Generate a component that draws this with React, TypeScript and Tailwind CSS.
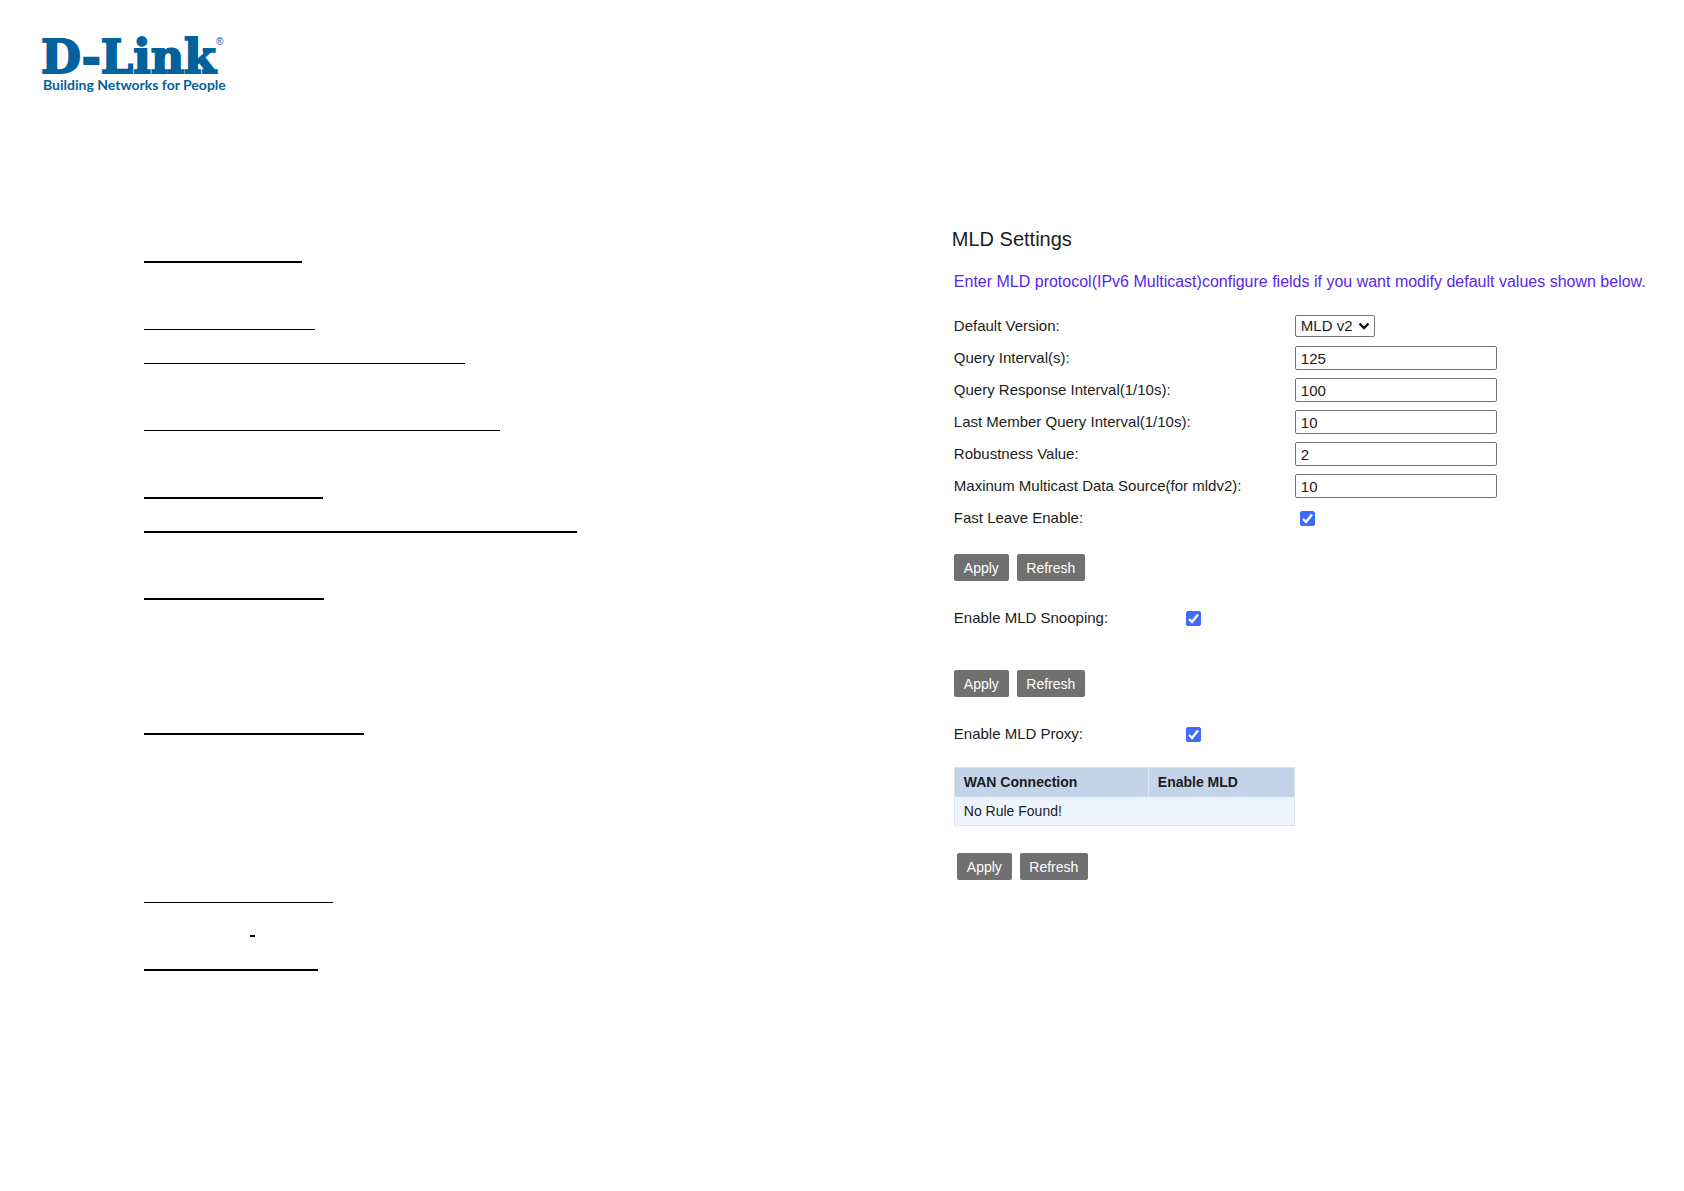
import React, { useState } from "react";

// blank form lines on the left page, each one sits at the bottom of its row
const rules = [
  { row: "h-9", line: "h-0.5 w-[158px]" },
  { row: "h-[67px]", line: "h-px w-[171px]" },
  { row: "h-[34px]", line: "h-px w-[321px]" },
  { row: "h-[67px]", line: "h-px w-[356px]" },
  { row: "h-[68px]", line: "h-0.5 w-[179px]" },
  { row: "h-[34px]", line: "h-0.5 w-[433px]" },
  { row: "h-[67px]", line: "h-0.5 w-[180px]" },
  { row: "h-[135px]", line: "h-0.5 w-[220px]" },
  { row: "h-[168px]", line: "h-px w-[189px]" },
  { row: "h-[34px]", line: "ml-[106px] h-0.5 w-[5px]" },
  { row: "h-[34px]", line: "h-0.5 w-[174px]" },
];

const fields = [
  { id: "queryInterval", label: "Query Interval(s):", value: "125" },
  { id: "queryResponse", label: "Query Response Interval(1/10s):", value: "100" },
  { id: "lastMember", label: "Last Member Query Interval(1/10s):", value: "10" },
  { id: "robustness", label: "Robustness Value:", value: "2" },
  { id: "maxSource", label: "Maxinum Multicast Data Source(for mldv2):", value: "10" },
];

const Logo = () => (
  <div className="w-fit text-[#03629b]">
    <div className="flex items-start">
      <span className="font-['DejaVu_Serif',serif] text-[46px] font-bold leading-[42px] [-webkit-text-stroke:2px_#03629b]">
        D-Link
      </span>
      <span className="font-['Liberation_Sans',sans-serif] text-[10px] leading-3">®</span>
    </div>
    <p className="pl-0.5 font-[Lato,sans-serif] text-sm font-bold leading-[14px]">
      Building Networks for People
    </p>
  </div>
);

const Check = ({ id }: { id: string }) => {
  const [on, setOn] = useState<boolean>(true);
  return (
    <span className="grid size-[15px]">
      <input
        id={id}
        type="checkbox"
        checked={on}
        onChange={() => setOn(!on)}
        className="col-start-1 row-start-1 size-[15px] appearance-none rounded-xs border border-gray-500 checked:border-[#3f6bfb] checked:bg-[#3f6bfb]"
      />
      {on && (
        <svg viewBox="0 0 15 15" className="pointer-events-none col-start-1 row-start-1 size-[15px]">
          <path d="M3 8 L6 11 L12 3.4" fill="none" stroke="#fff" strokeWidth="2.4" />
        </svg>
      )}
    </span>
  );
};

const Actions = () => (
  <div className="flex gap-2">
    <button type="submit" className="h-[27px] w-[55px] rounded-xs bg-[#707070] text-sm text-white">
      Apply
    </button>
    <button type="reset" className="h-[27px] w-[68px] rounded-xs bg-[#707070] text-sm text-white">
      Refresh
    </button>
  </div>
);

const App = () => {
  const stop = (e: React.FormEvent) => e.preventDefault();

  return (
    <div className="min-h-screen bg-white text-[#1c1c1c]">
      <header className="px-[41px] pt-9">
        <Logo />
      </header>

      <main className="grid grid-cols-[13fr_10fr] pt-[135px] font-['Liberation_Sans',Arial,sans-serif] text-[15px]">
        {/* Left page */}
        <div className="pl-36">
          {rules.map((rule, i) => (
            <div key={i} className={`flex items-end ${rule.row}`}>
              <div className={`bg-black ${rule.line}`} />
            </div>
          ))}
        </div>

        {/* MLD settings */}
        <section>
          <h1 className="text-xl leading-6">MLD Settings</h1>
          <div className="pl-0.5">
            <p className="mt-[21px] whitespace-nowrap text-base leading-5 text-[#5a27e6]">
              Enter MLD protocol(IPv6 Multicast)configure fields if you want modify default values
              shown below.
            </p>

            <form onSubmit={stop} className="mt-[18px]">
              <div className="flex h-8 items-center">
                <label htmlFor="version" className="w-[341px]">
                  Default Version:
                </label>
                <span className="grid items-center">
                  <select
                    id="version"
                    className="col-start-1 row-start-1 h-[22px] w-20 appearance-none rounded-xs border border-[#767676] bg-white pl-[5px] leading-5"
                  >
                    <option>MLD v2</option>
                    <option>MLD v1</option>
                  </select>
                  <svg
                    viewBox="0 0 12 8"
                    className="pointer-events-none col-start-1 row-start-1 mr-[5px] h-2 w-3 justify-self-end"
                  >
                    <path d="M1.5 1.5 L6 6 L10.5 1.5" fill="none" stroke="#111" strokeWidth="2.4" />
                  </svg>
                </span>
              </div>
              {fields.map((f) => (
                <div key={f.id} className="flex h-8 items-center">
                  <label htmlFor={f.id} className="w-[341px]">
                    {f.label}
                  </label>
                  <input
                    id={f.id}
                    type="text"
                    defaultValue={f.value}
                    className="h-6 w-[202px] rounded-xs border border-[#767676] bg-white px-[5px]"
                  />
                </div>
              ))}
              <div className="flex h-8 items-center">
                <label htmlFor="fastLeave" className="w-[346px]">
                  Fast Leave Enable:
                </label>
                <Check id="fastLeave" />
              </div>
              <div className="mt-5">
                <Actions />
              </div>
            </form>

            <form onSubmit={stop} className="mt-[21px]">
              <div className="flex h-8 items-center">
                <label htmlFor="snooping" className="w-[232px]">
                  Enable MLD Snooping:
                </label>
                <Check id="snooping" />
              </div>
              <div className="mt-9">
                <Actions />
              </div>
            </form>

            <form onSubmit={stop} className="mt-[21px]">
              <div className="flex h-8 items-center">
                <label htmlFor="proxy" className="w-[232px]">
                  Enable MLD Proxy:
                </label>
                <Check id="proxy" />
              </div>
              <table className="mt-[17px] w-[341px] border-collapse border border-[#dde3ec] text-left text-sm">
                <thead>
                  <tr className="h-[29px] bg-[#c3d4e8]">
                    <th className="w-[194px] border-r border-[#dde6f1] pl-[9px]">WAN Connection</th>
                    <th className="pl-[9px]">Enable MLD</th>
                  </tr>
                </thead>
                <tbody>
                  <tr className="h-[29px] bg-[#eef4fe]">
                    <td colSpan={2} className="pl-[9px]">
                      No Rule Found!
                    </td>
                  </tr>
                </tbody>
              </table>
              <div className="mt-[27px] pl-[3px]">
                <Actions />
              </div>
            </form>
          </div>
        </section>
      </main>
    </div>
  );
};

export default App;
